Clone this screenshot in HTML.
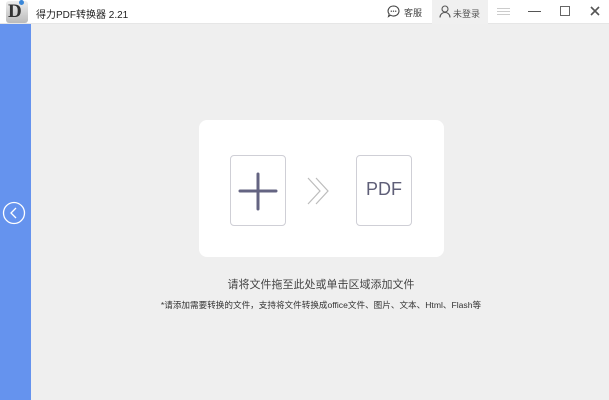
<!DOCTYPE html>
<html><head><meta charset="utf-8"><style>
*{margin:0;padding:0;box-sizing:border-box}
body{width:609px;height:400px;overflow:hidden;background:#efefef;font-family:"Liberation Sans","Noto Sans CJK SC",sans-serif;position:relative}
.top{position:absolute;left:0;top:0;width:609px;height:24px;background:#fff;border-bottom:1px solid #e6e6e6}
.side{position:absolute;left:0;top:24px;width:31px;height:376px;background:#6593ee}
.t{position:absolute;font-size:12px;color:#222;white-space:nowrap}
.card{position:absolute;left:199px;top:120px;width:245px;height:137px;background:#fff;border-radius:8px}
.box{position:absolute;top:35px;width:56px;height:71px;border:1px solid #cfcfd6;border-radius:4px;background:#fff}
</style></head><body>
<div class="top">
 <div style="position:absolute;left:6px;top:1px;width:22px;height:22px;background:linear-gradient(#eee,#bbb);border-radius:3px;font-family:'Liberation Serif',serif;font-size:19px;font-weight:bold;color:#333;line-height:22px;padding-left:2px">D</div>
 <div style="position:absolute;left:19px;top:0;width:5px;height:5px;border-radius:50%;background:#3a87d8"></div>
 <div class="t" style="left:36px;top:6px;font-size:10px">得力PDF转换器 2.21</div>
 <svg style="position:absolute;left:387px;top:5px" width="13" height="13" viewBox="0 0 13 13"><path d="M6.5 1a5.5 5 0 1 1-3 9.2L1.5 11.5 2.2 9A5.5 5 0 0 1 6.5 1z" fill="none" stroke="#444" stroke-width="1.1"/><circle cx="4.3" cy="6.2" r=".7" fill="#444"/><circle cx="6.5" cy="6.2" r=".7" fill="#444"/><circle cx="8.7" cy="6.2" r=".7" fill="#444"/></svg>
 <div class="t" style="left:404px;top:6px;font-size:9px;color:#444">客服</div>
 <div style="position:absolute;left:432px;top:0;width:56px;height:24px;background:#f0f0f0"></div>
 <svg style="position:absolute;left:439px;top:5px" width="12" height="13" viewBox="0 0 12 13"><circle cx="6" cy="4" r="3" fill="none" stroke="#555" stroke-width="1.1"/><path d="M1 12.5c0-3 2.2-5 5-5s5 2 5 5" fill="none" stroke="#555" stroke-width="1.1"/></svg>
 <div class="t" style="left:453px;top:7px;font-size:9px;color:#555">未登录</div>
 <div style="position:absolute;left:497px;top:8px;width:13px;height:7px;border-top:1px solid #ccc;border-bottom:1px solid #ccc"></div>
 <div style="position:absolute;left:497px;top:11px;width:13px;height:1px;background:#ccc"></div>
 <div style="position:absolute;left:528px;top:11px;width:13px;height:1px;background:#555"></div>
 <div style="position:absolute;left:560px;top:6px;width:10px;height:10px;border:1px solid #666"></div>
 <svg style="position:absolute;left:590px;top:6px" width="10" height="10"><path d="M1 1l8 8M9 1l-8 8" stroke="#555" stroke-width="1.6"/></svg>
</div>
<div class="side"></div>
<svg style="position:absolute;left:2px;top:201px" width="24" height="24"><circle cx="12" cy="12" r="10.5" fill="none" stroke="#fff" stroke-width="1.3"/><path d="M14 7l-5 5 5 5" fill="none" stroke="#fff" stroke-width="1.3"/></svg>
<div class="card">
 <div class="box" style="left:31px"><svg width="54" height="69"><path d="M27 18v35M9 35h36" stroke="#646482" stroke-width="3" stroke-linecap="round"/></svg></div>
 <svg style="position:absolute;left:107px;top:56px" width="30" height="30"><path d="M2 2l12 13-12 13M10 2l12 13-12 13" fill="none" stroke="#bcbcbc" stroke-width="1.2"/></svg>
 <div class="box" style="left:157px"><div style="position:absolute;left:0;width:54px;top:23px;text-align:center;font-size:18px;color:#5f5f78">PDF</div></div>
</div>
<div class="t" style="left:0;width:642px;text-align:center;top:276px;font-size:11px;color:#444">请将文件拖至此处或单击区域添加文件</div>
<div class="t" style="left:0;width:642px;text-align:center;top:299px;font-size:8.6px;color:#333">*请添加需要转换的文件，支持将文件转换成office文件、图片、文本、Html、Flash等</div>
</body></html>
